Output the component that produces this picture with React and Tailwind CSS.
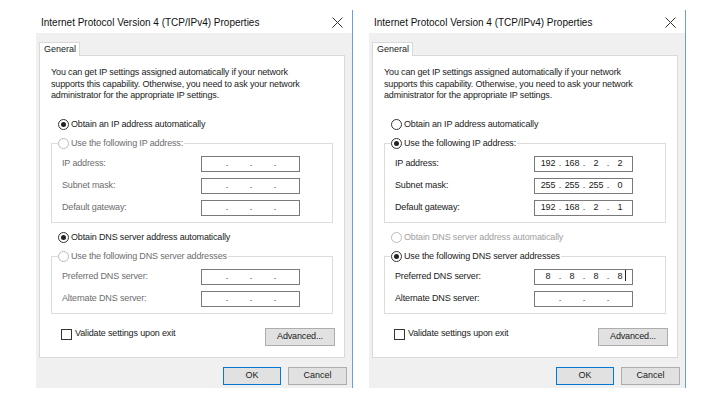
import React from "react";

const font = { fontFamily: '"Liberation Sans", Arial, sans-serif' };

const Radio = ({ checked, disabled }) => (
  <span
    className={`w-[11px] h-[11px] rounded-full border bg-white flex items-center justify-center shrink-0 ${
      disabled ? "border-[#bcbcbc]" : "border-[#333]"
    }`}
  >
    {checked && <span className="w-[5px] h-[5px] rounded-full bg-[#222]" />}
  </span>
);

const IpField = ({ value, cursor }) => {
  const parts = value ? value.split(".") : ["", "", "", ""];
  return (
    <div className="w-[99px] h-[16px] border border-[#7a7a7a] bg-white flex items-center pl-[3px] text-[9px] text-[#1a1a1a]">
      {parts.map((p, i) => (
        <React.Fragment key={i}>
          <span className="w-[20px] text-center relative">
            {p}
            {cursor && i === 3 && (
              <span className="absolute right-[4px] top-[0px] w-px h-[11px] bg-[#222]" />
            )}
          </span>
          {i < 3 && <span className="w-[4px] text-center">.</span>}
        </React.Fragment>
      ))}
    </div>
  );
};

const Row = ({ label, value, cursor, dim }) => (
  <div className="flex items-center h-[22px] pl-[10px]">
    <span className={`w-[139px] ${dim ? "text-[#6d6d6d]" : "text-[#1a1a1a]"}`}>{label}</span>
    <IpField value={value} cursor={cursor} />
  </div>
);

const Group = ({ title, checked, dim, children }) => (
  <div className="relative mx-[11px] border border-[#dcdcdc] pt-[9px] pb-[3px]">
    <div className="absolute -top-[7px] left-[6px] flex items-center gap-[2px] bg-white pr-[1px]">
      <Radio checked={checked} disabled={dim} />
      <span className={dim ? "text-[#6d6d6d]" : "text-[#1a1a1a]"}>{title}</span>
    </div>
    {children}
  </div>
);

const Button = ({ children, primary, w }) => (
  <div
    className={`${w} h-[18px] flex items-center justify-center bg-[#e1e1e1] text-[9px] text-[#1a1a1a] border ${
      primary ? "border-[#0078d7]" : "border-[#adadad]"
    }`}
  >
    {children}
  </div>
);

const Dialog = ({ manual }) => (
  <div className="flex">
    <div className="w-[316px] flex flex-col">
      {/* title bar */}
      <div className="h-[33px] bg-white flex items-center justify-between pl-[5px] pr-[9px] pt-[12px]">
        <span className="text-[10px] text-[#111]">Internet Protocol Version 4 (TCP/IPv4) Properties</span>
        <svg width="11" height="11" viewBox="0 0 11 11">
          <path d="M0.5 0.5 L10.5 10.5 M10.5 0.5 L0.5 10.5" stroke="#333" strokeWidth="1" />
        </svg>
      </div>

      {/* body */}
      <div className="h-[355px] bg-[#f0f0f0] flex flex-col pt-[9px] px-[3px]">
        <div className="w-[41px] h-[14px] -mb-px border border-b-0 border-[#d9d9d9] bg-white relative z-10 text-[9px] pl-[4px] leading-[13px] text-[#1a1a1a]">
          General
        </div>
        <div className="w-[306px] h-[303px] border border-[#d9d9d9] bg-white text-[9px] tracking-[-0.15px] text-[#1a1a1a] flex flex-col">
          <p className="mt-[11px] ml-[11px] leading-[11.5px]">
            You can get IP settings assigned automatically if your network
            <br />
            supports this capability. Otherwise, you need to ask your network
            <br />
            administrator for the appropriate IP settings.
          </p>

          <div className="mt-[17px] ml-[18px] flex items-center gap-[2px] h-[12px]">
            <Radio checked={!manual} />
            <span>Obtain an IP address automatically</span>
          </div>

          <div className="mt-[12px]">
            <Group title="Use the following IP address:" checked={manual} dim={!manual}>
              <Row label="IP address:" value={manual ? "192.168.2.2" : null} dim={!manual} />
              <Row label="Subnet mask:" value={manual ? "255.255.255.0" : null} dim={!manual} />
              <Row label="Default gateway:" value={manual ? "192.168.2.1" : null} dim={!manual} />
            </Group>
          </div>

          <div className="mt-[9px] ml-[18px] flex items-center gap-[2px] h-[12px]">
            <Radio checked={!manual} disabled={manual} />
            <span className={manual ? "text-[#a0a0a0]" : ""}>Obtain DNS server address automatically</span>
          </div>

          <div className="mt-[12px]">
            <Group title="Use the following DNS server addresses" checked={manual} dim={!manual}>
              <Row label="Preferred DNS server:" value={manual ? "8.8.8.8" : null} cursor={manual} dim={!manual} />
              <Row label="Alternate DNS server:" value={null} dim={!manual} />
            </Group>
          </div>

          <div className="mt-[14px] flex items-center justify-between pl-[21px] pr-[9px]">
            <div className="flex items-center gap-[3px] -mt-[5px]">
              <span className="w-[11px] h-[11px] border border-[#333] bg-white" />
              <span>Validate settings upon exit</span>
            </div>
            <Button w="w-[70px]">Advanced...</Button>
          </div>
        </div>

        <div className="mt-[9px] flex justify-end gap-[7px] pr-[2px]">
          <Button primary w="w-[58px]">OK</Button>
          <Button w="w-[59px]">Cancel</Button>
        </div>
      </div>
    </div>
    <div className="w-px mt-[10px] h-[378px] bg-[#6c9fd9]" />
  </div>
);

export default function App() {
  return (
    <div className="w-[724px] h-[394px] bg-white flex overflow-hidden" style={font}>
      <div className="ml-[36px]">
        <Dialog manual={false} />
      </div>
      <div className="ml-[16px]">
        <Dialog manual />
      </div>
    </div>
  );
}
